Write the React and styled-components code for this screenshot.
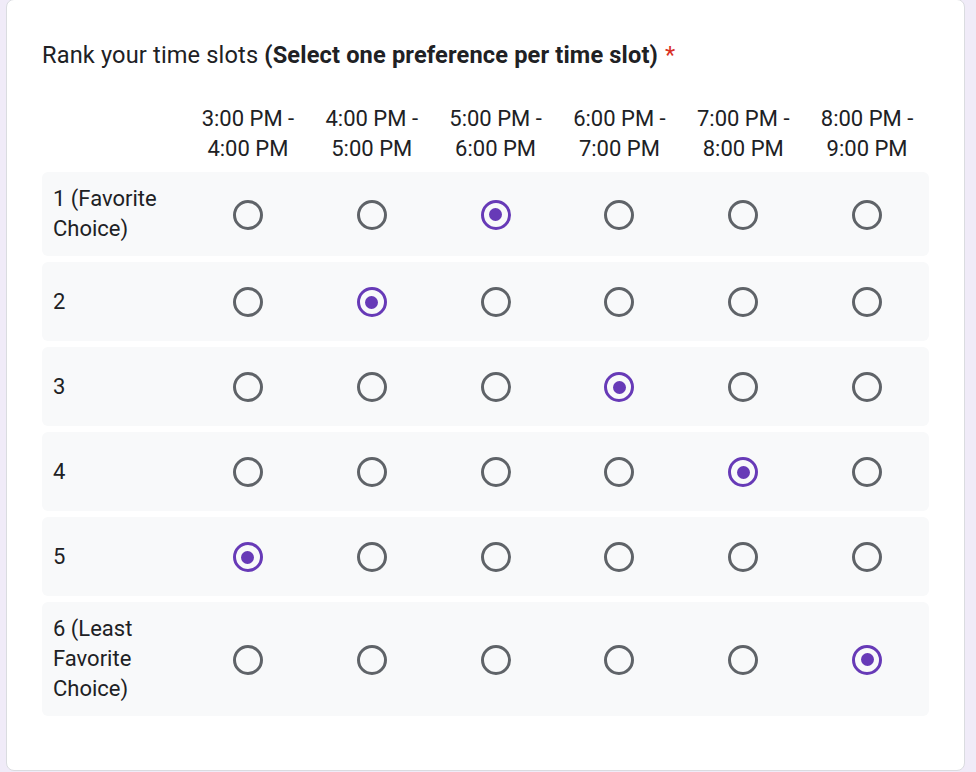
import React from "react";
import styled, { createGlobalStyle } from "styled-components";

const Global = createGlobalStyle`
  html, body { margin: 0; padding: 0; background: #f0ebf8; }
  body { font-family: Roboto, "Liberation Sans", Arial, sans-serif; color: #202124; }
`;

const Page = styled.div`
  padding: 0 11px 0 6px;
  height: 772px;
  box-sizing: border-box;
  overflow: hidden;
`;

const Card = styled.div`
  background: #fff;
  border: 1px solid #dadce0;
  border-radius: 8px;
  margin-top: -1px;
  height: 772px;
  box-sizing: border-box;
  padding: 40px 35px 0 35px;
`;

const Title = styled.div`
  font-size: 23.6px;
  line-height: 30px;
  letter-spacing: 0.15px;
  color: #202124;
  margin-bottom: 33px;
`;

const Strong = styled.span`
  font-weight: 700;
`;

const Required = styled.span`
  color: #d93025;
  margin-left: 7px;
`;

const GridRow = styled.div`
  display: grid;
  grid-template-columns: 144px repeat(6, 1fr);
  align-items: center;
`;

const HeaderRow = styled(GridRow)`
  padding-bottom: 8px;
`;

const BodyRow = styled(GridRow)`
  background: #f8f9fa;
  border-radius: 6px;
  min-height: 79px;
  margin-bottom: 6px;
`;

const HeaderCell = styled.div`
  font-size: 22px;
  line-height: 30px;
  text-align: center;
  padding: 1px 6px 0;
`;

const RowLabel = styled.div`
  font-size: 22px;
  line-height: 30px;
  padding: 12px 12px 12px 11px;
`;

const RadioCell = styled.div`
  display: flex;
  justify-content: center;
  align-items: center;
  padding-top: 1px;
`;

const Radio = styled.span`
  width: 30px;
  height: 30px;
  box-sizing: border-box;
  border-radius: 50%;
  border: 3px solid ${(p) => (p.$checked ? "#673ab7" : "#5f6368")};
  display: flex;
  align-items: center;
  justify-content: center;
  &::after {
    content: "";
    width: 13px;
    height: 13px;
    border-radius: 50%;
    background: #673ab7;
    display: ${(p) => (p.$checked ? "block" : "none")};
  }
`;

const columns = [
  "3:00 PM - 4:00 PM",
  "4:00 PM - 5:00 PM",
  "5:00 PM - 6:00 PM",
  "6:00 PM - 7:00 PM",
  "7:00 PM - 8:00 PM",
  "8:00 PM - 9:00 PM",
];

const rows = [
  { label: "1 (Favorite Choice)", pick: 2 },
  { label: "2", pick: 1 },
  { label: "3", pick: 3 },
  { label: "4", pick: 4 },
  { label: "5", pick: 0 },
  { label: "6 (Least Favorite Choice)", pick: 5 },
];

export default function App() {
  return (
    <Page>
      <Global />
      <Card>
        <Title>
          Rank your time slots <Strong>(Select one preference per time slot)</Strong>
          <Required>*</Required>
        </Title>
        <HeaderRow>
          <div />
          {columns.map((c) => (
            <HeaderCell key={c}>{c}</HeaderCell>
          ))}
        </HeaderRow>
        {rows.map((r) => (
          <BodyRow key={r.label}>
            <RowLabel>{r.label}</RowLabel>
            {columns.map((c, i) => (
              <RadioCell key={c}>
                <Radio $checked={i === r.pick} />
              </RadioCell>
            ))}
          </BodyRow>
        ))}
      </Card>
    </Page>
  );
}
